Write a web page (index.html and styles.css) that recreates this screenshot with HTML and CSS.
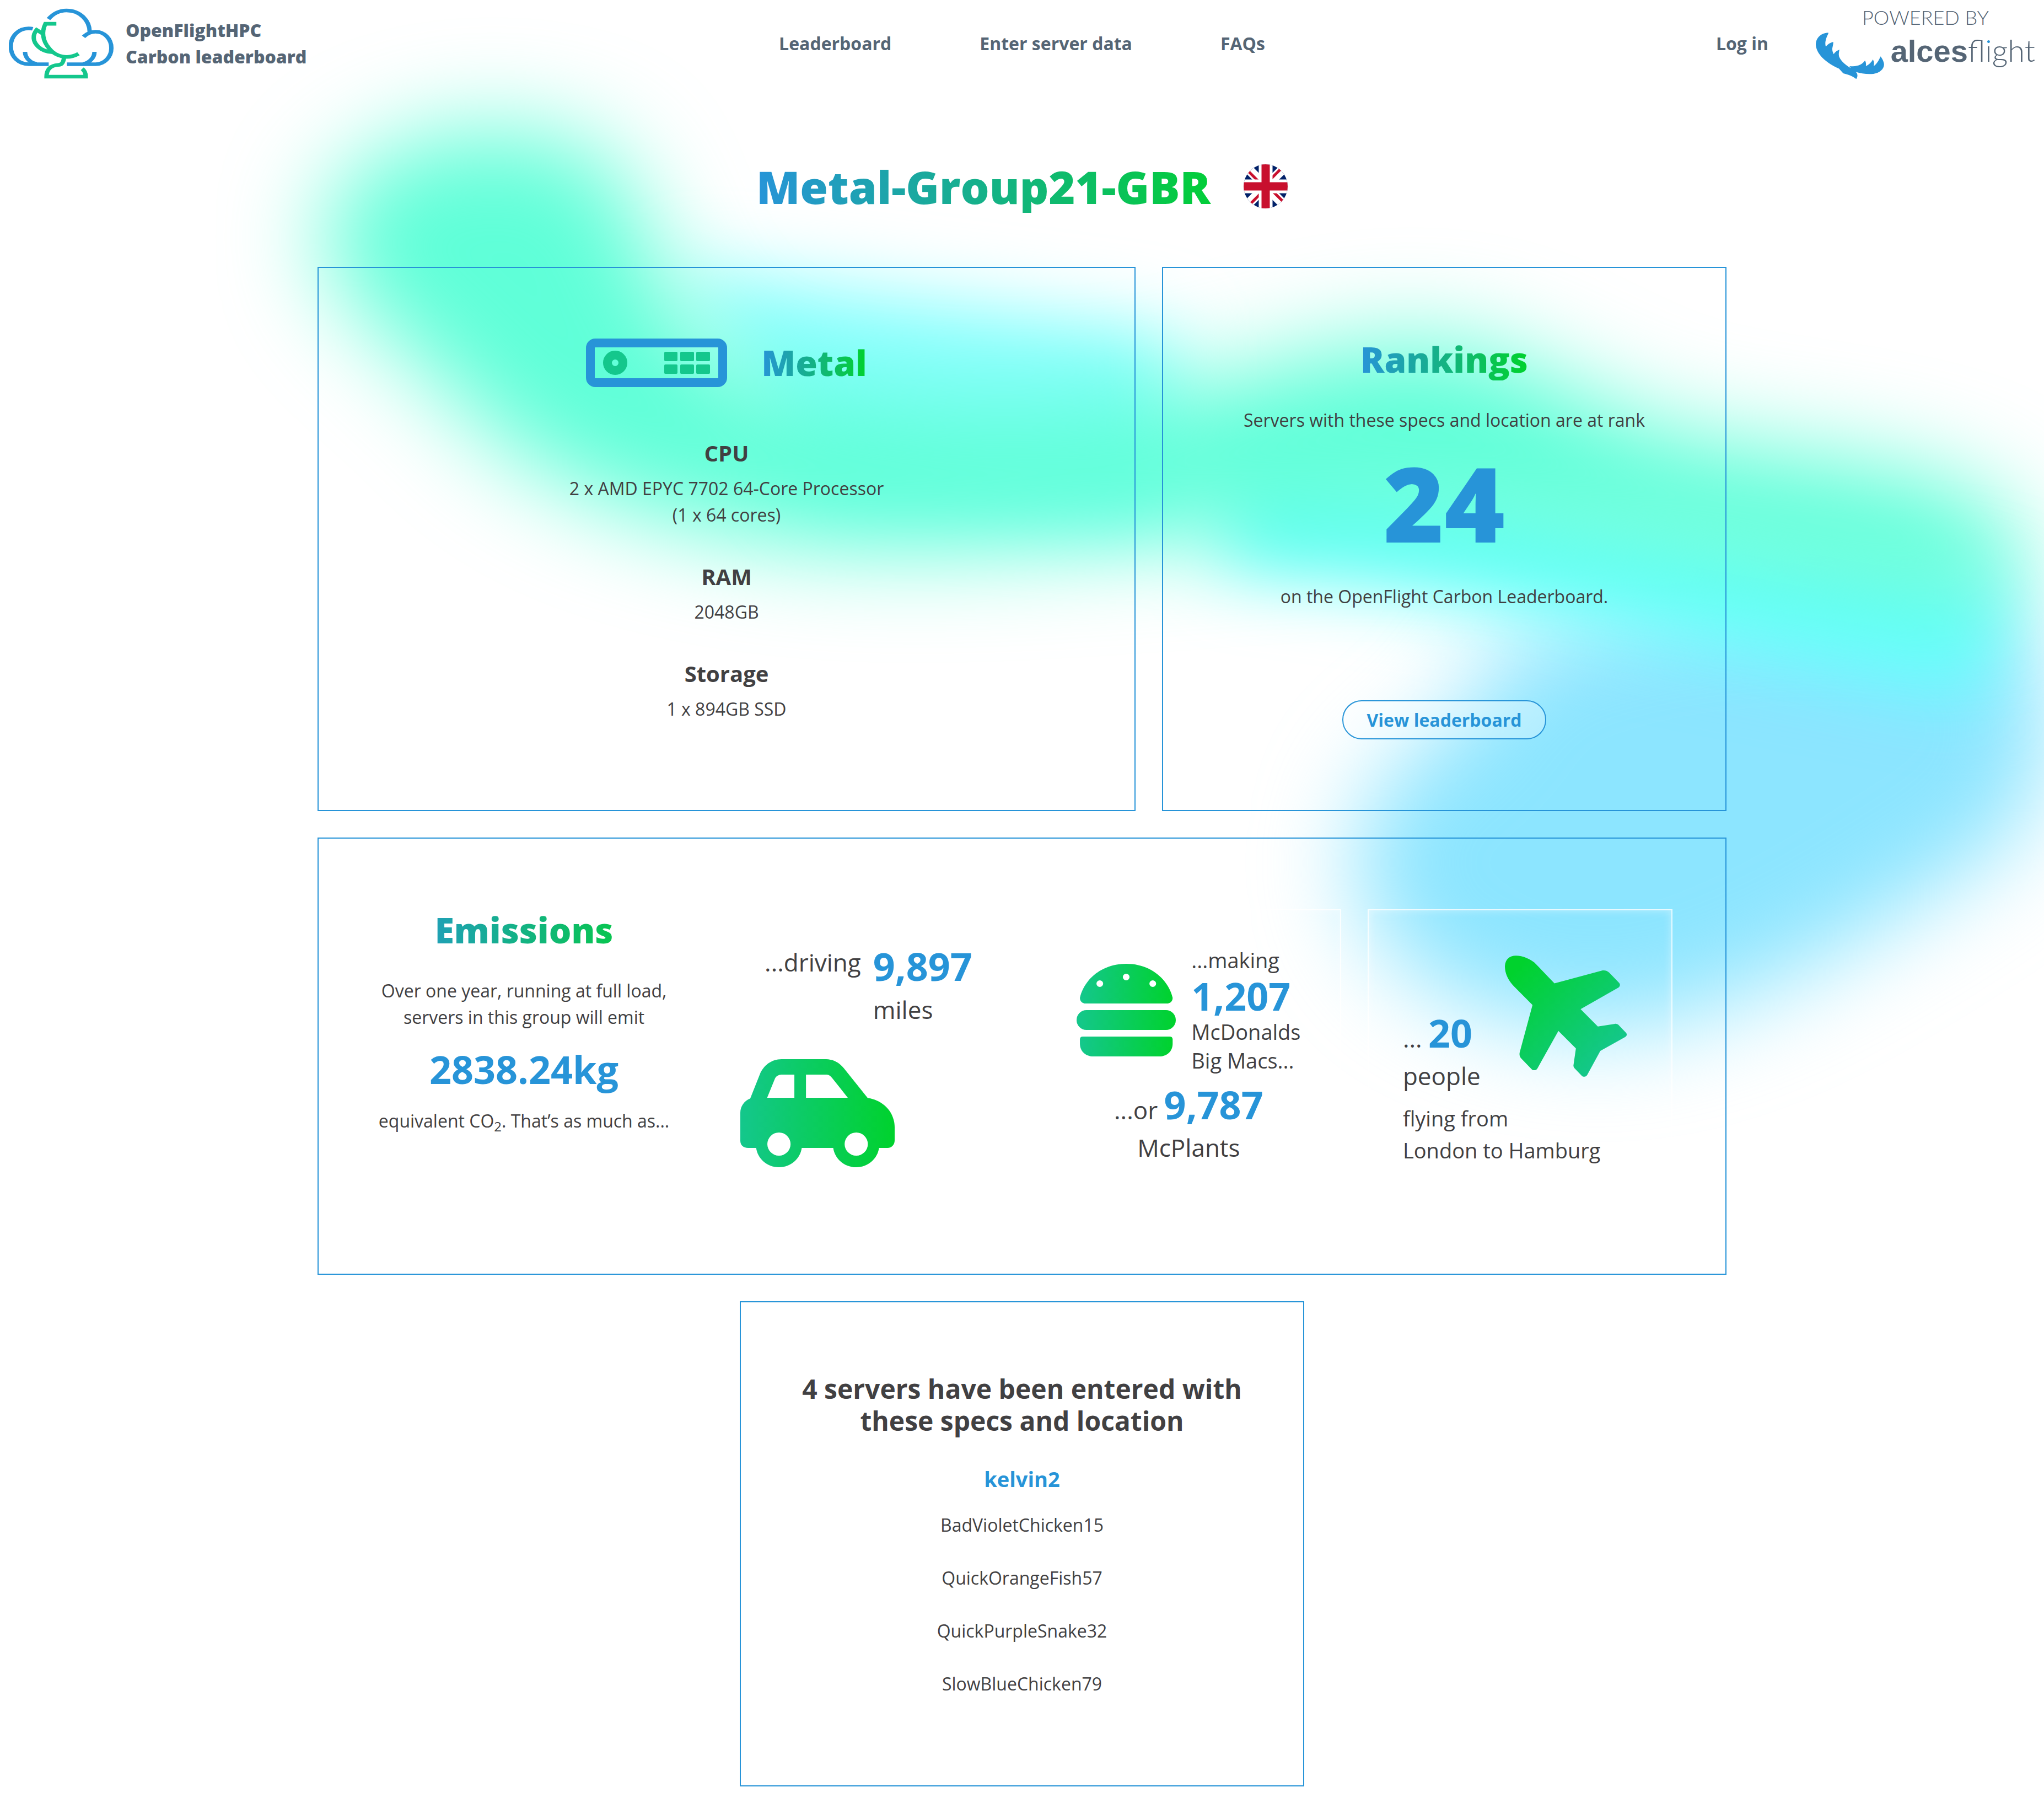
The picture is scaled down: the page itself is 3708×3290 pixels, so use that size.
FILE: index.html
```html
<!DOCTYPE html>
<html lang="en">
<head>
<meta charset="utf-8">
<meta name="viewport" content="width=device-width, initial-scale=1">
<title>Metal-Group21-GBR | OpenFlightHPC Carbon leaderboard</title>
<link rel="stylesheet" href="styles.css">
</head>
<body>
<svg class="backdrop" viewBox="0 0 1568 1391" preserveAspectRatio="xMidYMin slice" aria-hidden="true">
  <defs>
    <filter id="soft" filterUnits="userSpaceOnUse" x="-100" y="-100" width="1800" height="1300" color-interpolation-filters="sRGB"><feGaussianBlur stdDeviation="37"/></filter>
    <filter id="softer" filterUnits="userSpaceOnUse" x="-100" y="-100" width="1800" height="1300" color-interpolation-filters="sRGB"><feGaussianBlur stdDeviation="28"/></filter>
  </defs>
  <g filter="url(#soft)">
    <path fill="#8ce5ff" d="M1150 500C1280 440 1400 450 1530 460C1585 520 1590 610 1520 660C1440 710 1330 790 1220 790C1120 785 1025 730 1043 640C1060 570 1120 580 1150 500Z"/>
  </g>
  <g filter="url(#softer)">
    <path fill="#8cffff" d="M520 205C600 215 760 235 900 255V400L620 380Z"/>
    <path fill="none" stroke="#66ffff" stroke-width="90" d="M940 390C1080 400 1280 446 1530 494"/>
  </g>
  <g filter="url(#soft)">
    <path fill="#5fffd8" d="M258 150C300 88 430 85 474 130C505 180 505 260 600 295C690 310 800 315 900 300C980 280 1040 255 1110 262C1180 270 1230 325 1320 338C1420 354 1525 360 1548 410C1565 460 1530 482 1440 460C1320 440 1180 408 1050 402C900 408 780 424 660 420C540 415 420 385 355 310C310 260 215 210 258 150Z"/>
  </g>
</svg>

<header class="site-header">
  <a class="brand" href="#">
    <svg class="brand-mark" viewBox="40 44 478 386" preserveAspectRatio="none" fill="none" stroke-width="20" aria-hidden="true">
      <g stroke="#2794d8">
        <path d="M221 103C245 70 275 56 303 56C365 56 408 110 409 172"/>
        <path d="M381 200C400 178 420 172 436 172C475 172 508 210 508 262C508 312 475 350 436 350H305"/>
        <path d="M431 282C431 315 405 345 378 348"/>
        <path d="M149 156C142 154 136 154 130 154C85 154 49 195 49 252C49 310 85 350 132 350H222"/>
        <path d="M114 282C114 315 140 346 168 348"/>
      </g>
      <g stroke="#14c78c">
        <path d="M257 129H207C190 170 192 220 225 265C255 310 310 325 358 293"/>
        <path d="M195 183L167 162C148 190 148 225 175 255C190 272 215 284 240 284"/>
        <path d="M292 315C288 345 280 353 265 354C230 356 212 380 212 418H391C391 400 386 385 375 375"/>
      </g>
    </svg>
    <span class="brand-name">OpenFlightHPC<br>Carbon leaderboard</span>
  </a>
  <nav class="main-nav">
    <a href="#">Leaderboard</a>
    <a href="#">Enter server data</a>
    <a href="#">FAQs</a>
  </nav>
  <div class="header-end">
    <a class="login" href="#">Log in</a>
    <a class="sponsor" href="#">
      <span class="sponsor-by">POWERED BY</span>
      <span class="sponsor-row">
        <svg class="sponsor-mark" viewBox="537 177 306 251" preserveAspectRatio="none" fill="#2794d8" aria-hidden="true"><path d="M593 178C560 180 537 205 537 243C540 300 590 345 641 373L660 398C685 405 705 415 718 429C726 415 725 400 716 391C740 400 770 404 795 401C830 395 850 365 840 335C838 325 832 315 827 306C820 325 812 345 796 359C800 345 797 335 793 323C785 340 775 352 761 359C763 350 762 338 757 329C745 350 725 364 688 359L694 370C665 350 640 320 640 297C640 285 642 275 643 270C632 275 623 283 617 294C612 282 610 272 611 262C613 250 616 238 615 228C603 232 590 240 582 253C576 235 583 205 593 184Z"/></svg>
        <span class="sponsor-name"><b>alces</b>fl<i>i</i>ght</span>
      </span>
    </a>
  </div>
</header>

<main>
  <div class="page-title">
    <h1>Metal-Group21-GBR</h1>
    <svg class="flag" viewBox="0 0 80 80" role="img" aria-label="United Kingdom">
      <clipPath id="disc"><circle cx="40" cy="40" r="40"/></clipPath>
      <g clip-path="url(#disc)">
        <path fill="#012169" d="M0 0H80V80H0Z"/>
        <path stroke="#fff" stroke-width="17" d="M0 0L80 80M80 0L0 80"/>
        <path stroke="#c8102e" stroke-width="5" d="M0 4L40 44M80 76L40 36M80 -4L40 36M0 84L40 44"/>
        <path stroke="#fff" stroke-width="25" d="M40 0V80M0 40H80"/>
        <path stroke="#c8102e" stroke-width="15" d="M40 0V80M0 40H80"/>
      </g>
    </svg>
  </div>

  <div class="cards">
    <section class="card specs">
      <div class="specs-head">
        <svg class="server-icon" viewBox="0 0 256 88" aria-hidden="true">
          <rect x="8" y="8" width="240" height="72" rx="9" fill="none" stroke="#2794d8" stroke-width="16"/>
          <circle cx="53" cy="44" r="14" fill="none" stroke="#14c78c" stroke-width="16"/>
          <g fill="#14c78c"><rect x="142" y="24" width="24" height="17" rx="2"/><rect x="171" y="24" width="25" height="17" rx="2"/><rect x="200" y="24" width="25" height="17" rx="2"/><rect x="142" y="47" width="24" height="17" rx="2"/><rect x="171" y="47" width="25" height="17" rx="2"/><rect x="200" y="47" width="25" height="17" rx="2"/></g>
        </svg>
        <h2>Metal</h2>
      </div>
      <div class="spec"><h3>CPU</h3><p>2 x AMD EPYC 7702 64-Core Processor<br>(1 x 64 cores)</p></div>
      <div class="spec"><h3>RAM</h3><p>2048GB</p></div>
      <div class="spec"><h3>Storage</h3><p>1 x 894GB SSD</p></div>
    </section>

    <section class="card rankings">
      <h2>Rankings</h2>
      <p>Servers with these specs and location are at rank</p>
      <div class="rank">24</div>
      <p>on the OpenFlight Carbon Leaderboard.</p>
      <a class="button" href="#">View leaderboard</a>
    </section>

    <section class="card emissions">
      <div class="summary">
        <h2>Emissions</h2>
        <p>Over one year, running at full load,<br>servers in this group will emit</p>
        <div class="figure">2838.24kg</div>
        <p>equivalent CO<sub>2</sub>. That’s as much as...</p>
      </div>

      <div class="tile driving">
        <div class="driving-text">
          <span class="lead">...driving</span>
          <div><strong>9,897</strong><span class="unit">miles</span></div>
        </div>
        <svg class="car" viewBox="110 849 731 588" preserveAspectRatio="none" aria-hidden="true">
          <defs><linearGradient id="fresh"><stop stop-color="#14c78c"/><stop offset="1" stop-color="#00d22d"/></linearGradient></defs>
          <path fill="url(#fresh)" fill-rule="evenodd" d="M305 849H517C550 850 580 868 600 898L713 1060C785 1072 841 1135 841 1220V1290C841 1315 827 1332 807 1332H767C760 1390 715 1437 659 1437C602 1437 557 1390 550 1332H401C394 1390 350 1437 293 1437C236 1437 192 1390 185 1332H147C125 1332 110 1317 110 1293V1140C110 1105 130 1075 157 1063L203 930C220 883 258 849 305 849ZM305 933C292 933 279 942 274 955L237 1059H366V933ZM421 933V1059H619L544 950C537 940 530 934 519 933ZM293 1248A55 63 0 1 0 293 1374A55 63 0 1 0 293 1248ZM659 1248A55 63 0 1 0 659 1374A55 63 0 1 0 659 1248Z"/>
        </svg>
      </div>

      <div class="tile eating">
        <div class="eating-top">
          <svg class="burger" viewBox="148 330 504 504" preserveAspectRatio="none" aria-hidden="true">
            <path fill="url(#fresh)" fill-rule="evenodd" d="M165 515C185 420 270 330 400 330C530 330 615 420 636 515C636 533 624 546 606 546H195C177 546 165 533 165 515ZM266 420a17 18 0 1 0 0 36a17 18 0 1 0 0-36ZM400 384a17 18 0 1 0 0 36a17 18 0 1 0 0-36ZM535 420a17 18 0 1 0 0 36a17 18 0 1 0 0-36Z"/>
            <rect fill="url(#fresh)" x="148" y="582" width="504" height="108" rx="50" ry="54"/>
            <path fill="url(#fresh)" d="M165 742Q165 726 180 726H620Q636 726 636 742V764C636 805 608 834 568 834H233C193 834 165 805 165 764Z"/>
          </svg>
          <div class="eating-text">
            <span>...making</span>
            <strong>1,207</strong>
            <span>McDonalds</span>
            <span>Big Macs...</span>
          </div>
        </div>
        <p class="or">...or <strong>9,787</strong></p>
        <p class="plants">McPlants</p>
      </div>

      <div class="tile flying">
        <div class="flying-top">
          <p class="people">... <strong>20</strong><span>people</span></p>
          <svg class="plane" viewBox="654 318 494 618" preserveAspectRatio="none" aria-hidden="true">
            <defs><linearGradient id="lift" x2="1" y2="1"><stop offset=".1" stop-color="#00d22d"/><stop offset=".85" stop-color="#14c78c"/></linearGradient></defs>
            <path fill="url(#lift)" d="M699 319C725 319 760 335 782 364L855 460L1046 395C1058 391 1070 396 1077 405L1117 457C1123 465 1121 475 1115 481L961 591L1031 680L1100 666C1106 665 1112 668 1115 672L1145 711C1150 719 1149 727 1143 732L1041 804L988 926C983 937 972 938 966 931L936 892C933 888 932 883 932 878L942 791L871 702L786 893C782 903 770 906 763 898L722 845C714 835 712 825 714 812L766 570L691 475C665 442 654 405 654 372C656 338 672 319 699 319Z"/>
          </svg>
        </div>
        <p class="route">flying from<br>London to Hamburg</p>
      </div>
    </section>

    <section class="card servers">
      <h4>4 servers have been entered with<br>these specs and location</h4>
      <a class="owner" href="#">kelvin2</a>
      <ul>
        <li>BadVioletChicken15</li>
        <li>QuickOrangeFish57</li>
        <li>QuickPurpleSnake32</li>
        <li>SlowBlueChicken79</li>
      </ul>
    </section>
  </div>
</main>
</body>
</html>
```
FILE: styles.css
```css
:root {
  --blue: #2794d8;
  --green: #00d22d;
  --slate: #556575;
  --ink: #414042;
}

* { box-sizing: border-box; }

body {
  position: relative;
  margin: 0;
  background: #fff;
  color: var(--ink);
  font: 400 32px/48px "Open Sans", "Liberation Sans", sans-serif;
}

h1, h2, h3, h4, p, ul { margin: 0; padding: 0; }
ul { list-style: none; }
a { text-decoration: none; }
svg { display: block; flex: none; }

.backdrop {
  position: absolute;
  inset: 0;
  z-index: -1;
  width: 100%;
  height: 100%;
}

/* Header */
.site-header {
  display: grid;
  grid-template-columns: 1fr auto 1fr;
  align-items: center;
  height: 158px;
  padding: 0 16px;
  font-weight: 700;
}
.site-header a { color: var(--slate); }
.brand { display: flex; align-items: center; gap: 22px; font-weight: 800; }
.brand-mark { width: 190px; height: 128px; }
.main-nav { display: flex; gap: 160px; }
.header-end { display: flex; align-items: center; justify-content: flex-end; gap: 86px; }
.sponsor { width: 398px; font-family: Lato, "Open Sans", sans-serif; font-weight: 300; }
.sponsor-by { display: block; font-size: 36px; line-height: 32px; text-align: center; }
.sponsor-row { display: flex; justify-content: space-between; margin-top: 12px; }
.sponsor-mark { width: 124px; height: 84px; }
.sponsor-name { font-size: 56px; line-height: 64px; white-space: nowrap; }
.sponsor-name b { font-family: "Liberation Sans", Arial, sans-serif; font-weight: 700; }
.sponsor-name i {
  font-style: normal;
  color: transparent;
  background: linear-gradient(var(--blue) 32%, var(--slate) 32%);
  -webkit-background-clip: text;
  background-clip: text;
}

/* Page title */
.page-title {
  display: flex;
  align-items: center;
  justify-content: center;
  padding: 132px 0 98px;
}
h1, h2 {
  color: transparent;
  background: linear-gradient(90deg, var(--blue), var(--green));
  -webkit-background-clip: text;
  background-clip: text;
  font-weight: 800;
}
h1 { padding-right: 60px; font-size: 82px; line-height: 96px; }
h2 { font-size: 64px; line-height: 76px; }
.flag { width: 80px; height: 80px; }

/* Cards */
.cards {
  display: grid;
  grid-template-columns: 1484fr 1024fr;
  gap: 48px;
  max-width: 2556px;
  margin: 0 auto 48px;
}
.card {
  border: 2px solid var(--blue);
  padding: 128px 96px;
  text-align: center;
}

.specs-head {
  display: flex;
  align-items: center;
  justify-content: center;
  gap: 62px;
  height: 88px;
  margin-bottom: 92px;
}
.server-icon { width: 256px; height: 88px; }
.spec + .spec { margin-top: 60px; }
h3 { margin-bottom: 12px; font-size: 40px; line-height: 56px; font-weight: 700; }

.rankings { display: flex; flex-direction: column; align-items: center; }
.rankings h2 { margin-bottom: 48px; }
.rank { margin-bottom: 22px; color: var(--blue); font-size: 188px; line-height: 250px; font-weight: 800; }
.button {
  margin-top: 164px;
  padding: 0 42px;
  border: 2px solid var(--blue);
  border-radius: 35px;
  background: rgba(255, 255, 255, .3);
  color: var(--blue);
  line-height: 67px;
  font-weight: 700;
}

/* Emissions */
.emissions {
  grid-column: 1 / -1;
  display: grid;
  grid-template-columns: repeat(4, 1fr);
  gap: 48px;
  min-height: 793px;
}
.emissions strong, .figure { color: var(--blue); font-size: 70px; font-weight: 700; }
.summary h2 { margin-bottom: 48px; }
.summary .figure { margin: 22px 0; line-height: 96px; }
.summary sub { font-size: 24px; line-height: 0; }
.tile {
  border: 2px solid rgba(255, 255, 255, .8);
  box-shadow: inset 0 0 16px rgba(255, 255, 255, .4);
  font-size: 44px;
  text-align: left;
}

.driving { padding: 56px 66px; }
.driving-text { display: flex; gap: 22px; padding-left: 44px; }
.lead { line-height: 76px; }
.driving strong, .unit { display: block; }
.driving strong { line-height: 90px; }
.unit { line-height: 68px; }
.car { width: 280px; height: 196px; margin-top: 56px; }

.eating { padding: 64px 0 48px; text-align: center; }
.eating-top { display: flex; align-items: center; justify-content: center; gap: 28px; }
.burger { width: 180px; height: 168px; }
.eating-text { display: grid; font-size: 38px; line-height: 52px; text-align: left; }
.eating-text strong { line-height: 78px; }
.or { margin-top: 24px; line-height: 80px; }
.or strong, .people strong { line-height: 0; }
.plants { line-height: 56px; }

.flying { padding: 82px 62px 48px; }
.flying-top { display: flex; gap: 44px; }
.people { align-self: flex-end; line-height: 80px; white-space: nowrap; }
.people span { display: block; line-height: 56px; }
.plane { width: 221px; height: 220px; margin-bottom: 26px; }
.route { margin-top: 20px; font-size: 38px; line-height: 58px; white-space: nowrap; }

/* Servers in the group */
.servers {
  grid-column: 1 / -1;
  justify-self: center;
  width: 40%;
  min-width: 1024px;
}
h4 { font-size: 48px; line-height: 58px; font-weight: 700; }
.owner {
  display: block;
  margin: 48px 0 32px;
  color: var(--blue);
  font-size: 38px;
  line-height: 56px;
  font-weight: 700;
}
.servers ul { display: grid; gap: 48px; padding-bottom: 32px; }
```
